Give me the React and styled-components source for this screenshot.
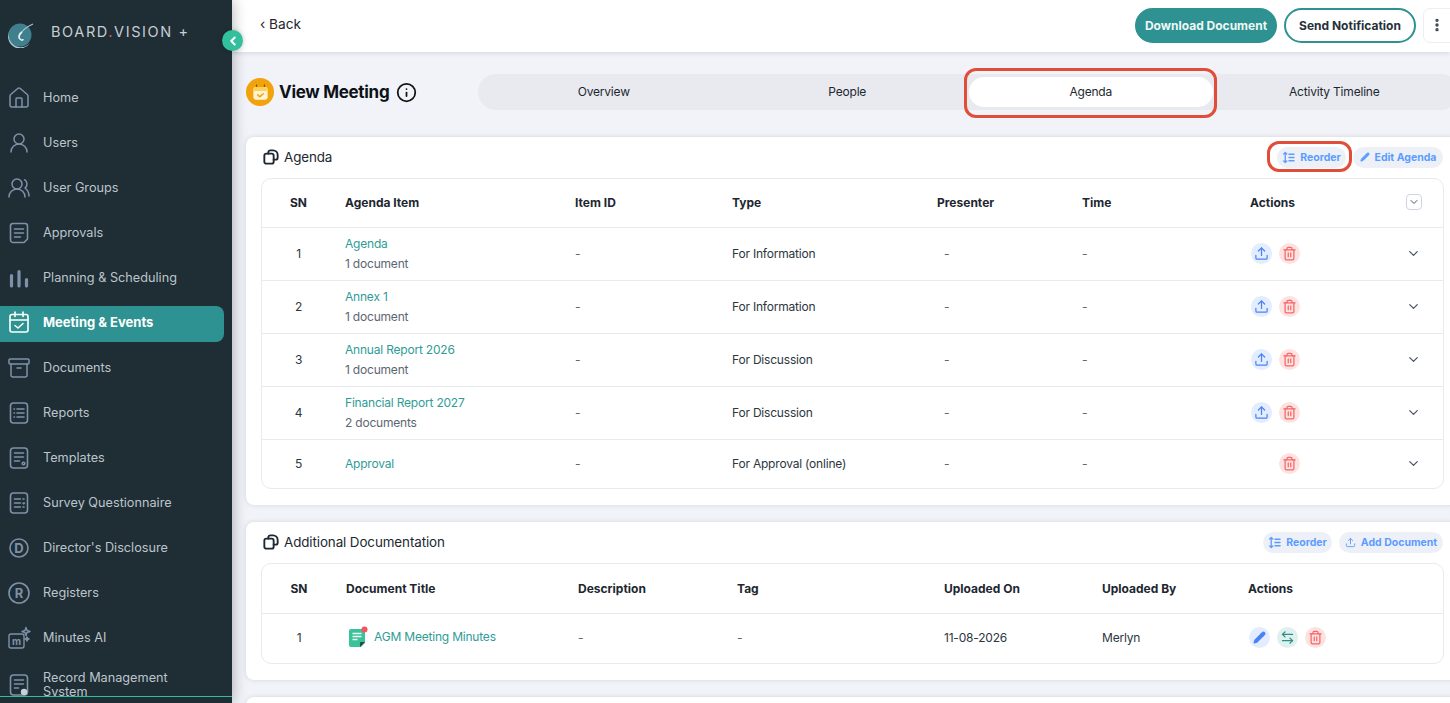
import React from 'react'
import styled, { createGlobalStyle } from 'styled-components'
import { ChevronDown, ChevronLeft, EllipsisVertical, Info, Upload, Trash2, Pencil, ArrowLeftRight, House, UserRound, UsersRound, Archive } from 'lucide-react'

const GlobalStyle = createGlobalStyle`
  html, body { margin: 0; height: 100%; overflow: hidden; }
  body { font-family: Inter, "Liberation Sans", sans-serif; color: #1d2730; background: #f1f3f8; }
  * { box-sizing: border-box; }
`

const Shell = styled.div`
  display: flex;
  width: 1450px;
  height: 703px;
  overflow: hidden;
`

const Sidebar = styled.aside`
  position: relative;
  z-index: 3;
  flex: 0 0 232px;
  height: 703px;
  background: #1f2d35;
  box-shadow: 0 0 14px rgba(0, 0, 0, 0.32);
`

const Brand = styled.div`
  display: flex;
  align-items: center;
  height: 81px;
  padding: 0 0 19px 6px;
  gap: 15px;
`

const BrandName = styled.span`
  font-size: 14.5px;
  letter-spacing: 1.6px;
  color: #c6ced2;
  white-space: nowrap;
  b { font-weight: 400; color: #d0604f; }
`

const CollapseButton = styled.button`
  position: absolute;
  top: 30px;
  right: -11px;
  width: 21px;
  height: 21px;
  padding: 0;
  border: 0;
  border-radius: 50%;
  background: #32bf9d;
  color: #fff;
  display: flex;
  align-items: center;
  justify-content: center;
  box-shadow: 0 0 5px rgba(0, 0, 0, 0.2);
`

const Nav = styled.nav`
  display: flex;
  flex-direction: column;
  gap: 9px;
  height: 616px;
  overflow: hidden;
  border-bottom: 1px solid #32bf9d;
`

const NavItem = styled.a`
  flex: 0 0 36px;
  width: 224px;
  display: flex;
  align-items: center;
  gap: 12px;
  padding: 0 0 ${p => (p.$active ? 4 : 2)}px 7px;
  border-radius: 0 8px 8px 0;
  font-size: ${p => (p.$active ? 13 : 12.7)}px;
  line-height: 14px;
  font-weight: ${p => (p.$active ? 700 : 400)};
  color: ${p => (p.$active ? '#fff' : '#bcc5cb')};
  background: ${p => (p.$active ? '#2d9291' : 'transparent')};
  svg { flex: 0 0 24px; color: ${p => (p.$active ? '#fff' : '#7f91a8')}; }
  span { max-width: 150px; }
  &:last-child { padding: 2px 0 0 7px; }
`

const Main = styled.main`
  flex: 1;
  min-width: 0;
  overflow: hidden;
`

const TopBar = styled.header`
  position: relative;
  z-index: 2;
  height: 52px;
  display: flex;
  align-items: center;
  justify-content: space-between;
  padding: 0 0 2px 28px;
  background: #fff;
  box-shadow: 0 1px 5px rgba(0, 0, 0, 0.12);
`

const BackLink = styled.a`
  display: flex;
  align-items: center;
  gap: 2px;
  padding-bottom: 2px;
  font-size: 13.7px;
  color: #1d2730;
`

const TopActions = styled.div`
  display: flex;
  align-items: center;
  gap: 7px;
  margin-right: -8px;
`

const PillButton = styled.button`
  height: 35px;
  padding: 0;
  width: ${p => p.$width}px;
  border-radius: 18px;
  border: 2px solid #2d9291;
  font: 700 12px Inter, "Liberation Sans", sans-serif;
  color: ${p => (p.$filled ? '#eef7f6' : '#25313a')};
  background: ${p => (p.$filled ? '#2d9291' : '#fff')};
`

const MoreButton = styled.button`
  width: 35px;
  height: 35px;
  padding: 0 8px 0 0;
  background: #fff;
  border: 1px solid #eceef2;
  border-radius: 7px;
  display: flex;
  align-items: center;
  justify-content: center;
  color: #33404a;
`

const Content = styled.div`
  padding: 22px 0 0 14px;
  display: flex;
  flex-direction: column;
`

const TitleRow = styled.div`
  display: flex;
  align-items: center;
  height: 36px;
  margin-bottom: 27px;
`

const TitleBlock = styled.div`
  flex: 0 0 232px;
  display: flex;
  align-items: center;
`

const BadgeIcon = styled.div`
  width: 28px;
  height: 28px;
  border-radius: 50%;
  background: #f2a20c;
  display: flex;
  align-items: center;
  justify-content: center;
  margin-right: 5px;
`

const PageTitle = styled.h1`
  margin: 0 7px 0 0;
  font-size: 17px;
  font-weight: 700;
  letter-spacing: -0.3px;
  color: #0c1218;
  white-space: nowrap;
`

const TabTrack = styled.div`
  flex: none;
  display: grid;
  grid-template-columns: repeat(4, 243.5px);
  padding: 3px 3px 3px 4px;
  height: 36px;
  border-radius: 18px;
  background: #e9eaef;
`

const Tab = styled.div`
  position: relative;
  display: flex;
  align-items: center;
  justify-content: center;
  padding-bottom: 1px;
  font-size: 12px;
  letter-spacing: -0.2px;
  color: #1d2730;
  border-radius: 15px;
  background: ${p => (p.$active ? '#fff' : 'transparent')};
`

const Highlight = styled.span`
  position: absolute;
  top: ${p => p.$t}px;
  right: ${p => p.$r}px;
  bottom: ${p => p.$b}px;
  left: ${p => p.$l}px;
  border: 3px solid #e04e39;
  border-radius: 12px;
  pointer-events: none;
`

const Card = styled.section`
  margin: 0 -10px 17px 0;
  padding: 0 16px 16px 15px;
  background: #fff;
  border-radius: 8px;
  box-shadow: 0 0 5px rgba(0, 0, 0, 0.12);
`

const CardHead = styled.div`
  height: 41px;
  display: flex;
  align-items: center;
  justify-content: space-between;
  padding: 0 0 1px 2px;
`

const CardTitle = styled.h2`
  margin: 0;
  display: flex;
  align-items: center;
  gap: 5px;
  font-size: 13.4px;
  font-weight: 400;
  letter-spacing: -0.1px;
  color: #1d2730;
`

const CardActions = styled.div`
  display: flex;
  gap: 7px;
  margin-right: 1px;
`

const SoftButton = styled.button`
  position: relative;
  height: 21px;
  width: ${p => p.$width}px;
  padding: 0;
  display: flex;
  align-items: center;
  justify-content: center;
  gap: 5px;
  border: 0;
  border-radius: 11px;
  background: #eef0f8;
  font: 700 10.5px Inter, "Liberation Sans", sans-serif;
  color: #5b9dff;
`

const TableBox = styled.div`
  border: 1px solid #e8eaee;
  border-radius: 10px;
`

const Row = styled.div`
  display: grid;
  grid-template-columns: ${p => p.$columns};
  align-items: center;
  height: ${p => p.$height}px;
  padding-bottom: ${p => p.$pad ?? 2}px;
  font-size: 12px;
  letter-spacing: -0.2px;
  color: #2c363e;
  border-bottom: ${p => (p.$last ? 0 : '1px solid #e8eaee')};
`

const HeadCell = styled.div`
  font-weight: 700;
  letter-spacing: 0;
  color: #1d2730;
`

const SnCell = styled.div`
  padding-right: 10px;
  text-align: center;
`

const Dash = styled.span`
  padding-left: ${p => p.$indent || 0}px;
  color: #5c6670;
`

const ItemTitle = styled.div`
  color: #2f9c96;
  line-height: 17px;
`

const ItemSub = styled.div`
  color: #5c6670;
  line-height: 17px;
  margin-top: 3px;
`

const ActionGroup = styled.div`
  display: flex;
  gap: 7px;
  padding-left: 1px;
`

const IconButton = styled.span`
  width: 21px;
  height: 21px;
  border-radius: 50%;
  display: flex;
  align-items: center;
  justify-content: center;
  color: ${p => ({ blue: '#4b82f5', red: '#f76565', teal: '#2d8f88' }[p.$tone])};
  background: ${p => ({ blue: '#e3edff', red: '#fde2e2', teal: '#dff0ee' }[p.$tone])};
  visibility: ${p => (p.$empty ? 'hidden' : 'visible')};
`

const ChevronBox = styled.span`
  width: 16px;
  height: 16px;
  display: flex;
  align-items: center;
  justify-content: center;
  border: 1px solid #cfd5e2;
  border-radius: 4px;
  color: #4a5668;
`

const RowChevron = styled(ChevronDown)`
  color: #4a5668;
`

const DocLink = styled.div`
  display: flex;
  align-items: center;
  gap: 6px;
  color: #2f9c96;
  padding-left: 2px;
  span { margin-top: -2px; }
`

const Stroke = ({ children }) => (
  <svg width="24" height="24" viewBox="0 0 24 24" fill="none" stroke="currentColor" strokeWidth="1.6" strokeLinecap="round" strokeLinejoin="round">
    {children}
  </svg>
)

const ApprovalsIcon = () => (
  <Stroke><path d="M6 2.500h12a2.500 2.500 0 0 1 2.500 2.500v13l-3.500 3.500H6A2.500 2.500 0 0 1 3.500 19V5A2.500 2.500 0 0 1 6 2.500Z" /><path d="M7.500 8h9M7.500 12h9M7.500 16h6" /></Stroke>
)
const ChartIcon = () => (
  <Stroke><path d="M4.500 9.500V20M12 5.500V20M19.500 13.500V20" strokeWidth="3.200" /></Stroke>
)
const CalendarCheckIcon = () => (
  <Stroke><rect x="3" y="4.500" width="18" height="17.500" rx="2" /><path d="M3 10h18M8 2v4.500M16 2v4.500M8 15.500l3 2.500 5-4.500" /></Stroke>
)
const ReportsIcon = () => (
  <Stroke><rect x="3.500" y="2" width="17" height="20" rx="3" /><path d="M10 8h7M10 12h7M10 16h7M7 8h.5M7 12h.5M7 16h.5" /></Stroke>
)
const TemplatesIcon = () => (
  <Stroke><rect x="3.500" y="2" width="17" height="20" rx="3" /><path d="M7.500 7h9M7.500 11h9M7.500 15h5" /><circle cx="16.500" cy="17.500" r="1.300" /></Stroke>
)
const SurveyIcon = () => (
  <Stroke><rect x="3.500" y="2" width="17" height="20" rx="3" /><path d="M7.500 8h6M7.500 12h6M7.500 16h6M16 8h1M16 12l.7.8.8-.8M16 16h1" /></Stroke>
)
const LetterCircleIcon = ({ letter, r = 10 }) => (
  <svg width="24" height="24" viewBox="0 0 24 24" fill="none" stroke="currentColor" strokeWidth="1.6">
    <circle cx="12" cy="12" r={r} />
    <text x="12" y="16.500" textAnchor="middle" fontSize="13" fontWeight="700" fontFamily="Inter, sans-serif" fill="currentColor" stroke="none">{letter}</text>
  </svg>
)
const MinutesIcon = () => (
  <svg width="24" height="24" viewBox="0 0 24 24" fill="none" stroke="currentColor" strokeWidth="1.400" strokeLinejoin="round">
    <rect x="2" y="8" width="15" height="14" rx="2" />
    <text x="9.500" y="18.500" textAnchor="middle" fontSize="10" fontWeight="700" fontFamily="Inter, sans-serif" fill="currentColor" stroke="none">m</text>
    <path d="M19 1.500l1 3 3 1-3 1-1 3-1-3-3-1 3-1ZM20 11l.6 1.400 1.400.6-1.400.6-.6 1.400-.6-1.400-1.400-.6 1.400-.6Z" />
  </svg>
)
const RecordIcon = () => (
  <Stroke><rect x="3.500" y="2" width="17" height="20" rx="3" /><path d="M7.500 7h9M7.500 11h9M7.500 15h4" /><circle cx="17" cy="19" r="3.200" fill="#c9d2dc" stroke="none" /></Stroke>
)

const Logo = () => (
  <svg width="30" height="30" viewBox="0 0 30 30" style={{ marginTop: 4 }}>
    <circle cx="14" cy="17" r="11.500" fill="#3f7f8e" />
    <path d="M5 24a12 12 0 0 1-1-12A11 11 0 0 0 24 25 12 12 0 0 1 5 24Z" fill="#a9cdd2" />
    <path d="M27 6C20 9 15 13 13 19" stroke="#a9c5ca" strokeWidth="1.200" fill="none" />
    <path d="M16 14c-3 2-4 5-2 7s3 1 3 0" stroke="#e6f0f1" strokeWidth="1.600" fill="none" />
  </svg>
)

const CopyIcon = () => (
  <svg width="16" height="16" viewBox="0 0 24 24" fill="none" stroke="#1d2730" strokeWidth="2.800" strokeLinejoin="round" strokeLinecap="round">
    <path d="M8 7V5a3 3 0 0 1 3-3h4a7 7 0 0 1 7 7v4a3 3 0 0 1-3 3h-3" />
    <rect x="2" y="7" width="14" height="15" rx="3" />
  </svg>
)

const ReorderIcon = () => (
  <svg width="13" height="13" viewBox="0 0 14 14" fill="none" stroke="currentColor" strokeWidth="1.400" strokeLinecap="round" strokeLinejoin="round">
    <path d="M3.500 1.500v11M1.800 3.200l1.700-1.700 1.700 1.700M1.800 10.800l1.700 1.700 1.700-1.700M7.500 3.500h5.500M7.500 7h5.500M7.500 10.500h5.500" />
  </svg>
)

const MeetingBadge = () => (
  <svg width="19" height="19" viewBox="0 0 24 24" fill="none">
    <path d="M7 2.500v4M17 2.500v4" stroke="#8a5a05" strokeWidth="1.600" strokeLinecap="round" />
    <rect x="3" y="5" width="18" height="16" rx="3" fill="#fff3d6" />
    <path d="M3 10V8a3 3 0 0 1 3-3h12a3 3 0 0 1 3 3v2Z" fill="#ffd257" />
    <path d="M8.500 15l2.500 2.500 4.500-4" stroke="#f2a20c" strokeWidth="1.800" strokeLinecap="round" strokeLinejoin="round" />
  </svg>
)

const DocNoteIcon = () => (
  <svg width="20" height="22" viewBox="0 0 20 22">
    <path d="M3 3h12a2 2 0 0 1 2 2v12l-4 4H3a2 2 0 0 1-2-2V5a2 2 0 0 1 2-2Z" fill="#3cc29a" />
    <path d="M17 16l-5 5v-4a1 1 0 0 1 1-1Z" fill="#33474a" />
    <path d="M4.500 7.500h9M4.500 10.500h9M4.500 13.500h5" stroke="#e9fbf5" strokeWidth="1.300" />
    <circle cx="16.500" cy="3.500" r="3" fill="#f4555a" />
  </svg>
)

const navItems = [
  { label: 'Home', icon: <House size={24} strokeWidth={1.5} /> },
  { label: 'Users', icon: <UserRound size={24} strokeWidth={1.5} /> },
  { label: 'User Groups', icon: <UsersRound size={24} strokeWidth={1.5} /> },
  { label: 'Approvals', icon: <ApprovalsIcon /> },
  { label: 'Planning & Scheduling', icon: <ChartIcon /> },
  { label: 'Meeting & Events', icon: <CalendarCheckIcon />, active: true },
  { label: 'Documents', icon: <Archive size={24} strokeWidth={1.5} /> },
  { label: 'Reports', icon: <ReportsIcon /> },
  { label: 'Templates', icon: <TemplatesIcon /> },
  { label: 'Survey Questionnaire', icon: <SurveyIcon /> },
  { label: "Director's Disclosure", icon: <LetterCircleIcon letter="D" r={9} /> },
  { label: 'Registers', icon: <LetterCircleIcon letter="R" /> },
  { label: 'Minutes AI', icon: <MinutesIcon /> },
  { label: 'Record Management System', icon: <RecordIcon /> },
]

const tabs = ['Overview', 'People', 'Agenda', 'Activity Timeline']

const agendaColumns = '83px 230px 157px 205px 145px 168px 156px 1fr'
const docColumns = '84px 232px 159px 207px 158px 146px 1fr'

const agendaRows = [
  { sn: 1, title: 'Agenda', sub: '1 document', type: 'For Information', height: 53 },
  { sn: 2, title: 'Annex 1', sub: '1 document', type: 'For Information', height: 53 },
  { sn: 3, title: 'Annual Report 2026', sub: '1 document', type: 'For Discussion', height: 53 },
  { sn: 4, title: 'Financial Report 2027', sub: '2 documents', type: 'For Discussion', height: 53 },
  { sn: 5, title: 'Approval', type: 'For Approval (online)', height: 48, last: true, noUpload: true },
]

export default function App() {
  return (
    <>
      <GlobalStyle />
      <Shell>
        <Sidebar>
          <Brand>
            <Logo />
            <BrandName>BOARD<b>.</b>VISION +</BrandName>
          </Brand>
          <CollapseButton aria-label="Collapse"><ChevronLeft size={14} strokeWidth={3.5} /></CollapseButton>
          <Nav>
            {navItems.map(item => (
              <NavItem key={item.label} $active={item.active}>
                {item.icon}
                <span>{item.label}</span>
              </NavItem>
            ))}
          </Nav>
        </Sidebar>
        <Main>
          <TopBar>
            <BackLink>‹ Back</BackLink>
            <TopActions>
              <PillButton $filled $width={142}>Download Document</PillButton>
              <PillButton $width={132}>Send Notification</PillButton>
              <MoreButton aria-label="More"><EllipsisVertical size={16} strokeWidth={3} /></MoreButton>
            </TopActions>
          </TopBar>
          <Content>
            <TitleRow>
              <TitleBlock>
                <BadgeIcon><MeetingBadge /></BadgeIcon>
                <PageTitle>View Meeting</PageTitle>
                <Info size={21} strokeWidth={2} color="#111" />
              </TitleBlock>
              <TabTrack>
                {tabs.map(tab => (
                  <Tab key={tab} $active={tab === 'Agenda'}>
                    {tab}
                    {tab === 'Agenda' && <Highlight $t={-9} $r={-4} $b={-11} $l={-5} />}
                  </Tab>
                ))}
              </TabTrack>
            </TitleRow>

            <Card>
              <CardHead>
                <CardTitle><CopyIcon />Agenda</CardTitle>
                <CardActions>
                  <SoftButton $width={69}>
                    <ReorderIcon />Reorder
                    <Highlight $t={-6} $r={-6} $b={-4} $l={-10} />
                  </SoftButton>
                  <SoftButton $width={90}><Pencil size={10} fill="currentColor" />Edit Agenda</SoftButton>
                </CardActions>
              </CardHead>
              <TableBox>
                <Row $columns={agendaColumns} $height={49}>
                  <SnCell><HeadCell>SN</HeadCell></SnCell>
                  <HeadCell>Agenda Item</HeadCell>
                  <HeadCell>Item ID</HeadCell>
                  <HeadCell>Type</HeadCell>
                  <HeadCell>Presenter</HeadCell>
                  <HeadCell>Time</HeadCell>
                  <HeadCell>Actions</HeadCell>
                  <ChevronBox><ChevronDown size={12} /></ChevronBox>
                </Row>
                {agendaRows.map(row => (
                  <Row key={row.sn} $columns={agendaColumns} $height={row.height} $last={row.last}>
                    <SnCell>{row.sn}</SnCell>
                    <div>
                      <ItemTitle>{row.title}</ItemTitle>
                      {row.sub && <ItemSub>{row.sub}</ItemSub>}
                    </div>
                    <Dash>-</Dash>
                    <div>{row.type}</div>
                    <Dash $indent={7}>-</Dash>
                    <Dash>-</Dash>
                    <ActionGroup>
                      <IconButton $tone="blue" $empty={row.noUpload}><Upload size={15} strokeWidth={2} /></IconButton>
                      <IconButton $tone="red"><Trash2 size={15} strokeWidth={2} /></IconButton>
                    </ActionGroup>
                    <RowChevron size={15} />
                  </Row>
                ))}
              </TableBox>
            </Card>

            <Card>
              <CardHead>
                <CardTitle><CopyIcon />Additional Documentation</CardTitle>
                <CardActions>
                  <SoftButton $width={69}><ReorderIcon />Reorder</SoftButton>
                  <SoftButton $width={104}><Upload size={11} />Add Document</SoftButton>
                </CardActions>
              </CardHead>
              <TableBox>
                <Row $columns={docColumns} $height={50} $pad={0}>
                  <SnCell><HeadCell>SN</HeadCell></SnCell>
                  <HeadCell>Document Title</HeadCell>
                  <HeadCell>Description</HeadCell>
                  <HeadCell>Tag</HeadCell>
                  <HeadCell>Uploaded On</HeadCell>
                  <HeadCell>Uploaded By</HeadCell>
                  <HeadCell>Actions</HeadCell>
                </Row>
                <Row $columns={docColumns} $height={49} $pad={3} $last>
                  <SnCell>1</SnCell>
                  <DocLink><DocNoteIcon /><span>AGM Meeting Minutes</span></DocLink>
                  <Dash>-</Dash>
                  <Dash>-</Dash>
                  <div>11-08-2026</div>
                  <div>Merlyn</div>
                  <ActionGroup>
                    <IconButton $tone="blue"><Pencil size={13} fill="currentColor" /></IconButton>
                    <IconButton $tone="teal"><ArrowLeftRight size={15} strokeWidth={2.2} /></IconButton>
                    <IconButton $tone="red"><Trash2 size={15} strokeWidth={2} /></IconButton>
                  </ActionGroup>
                </Row>
              </TableBox>
            </Card>

            <Card><CardHead /></Card>
          </Content>
        </Main>
      </Shell>
    </>
  )
}
